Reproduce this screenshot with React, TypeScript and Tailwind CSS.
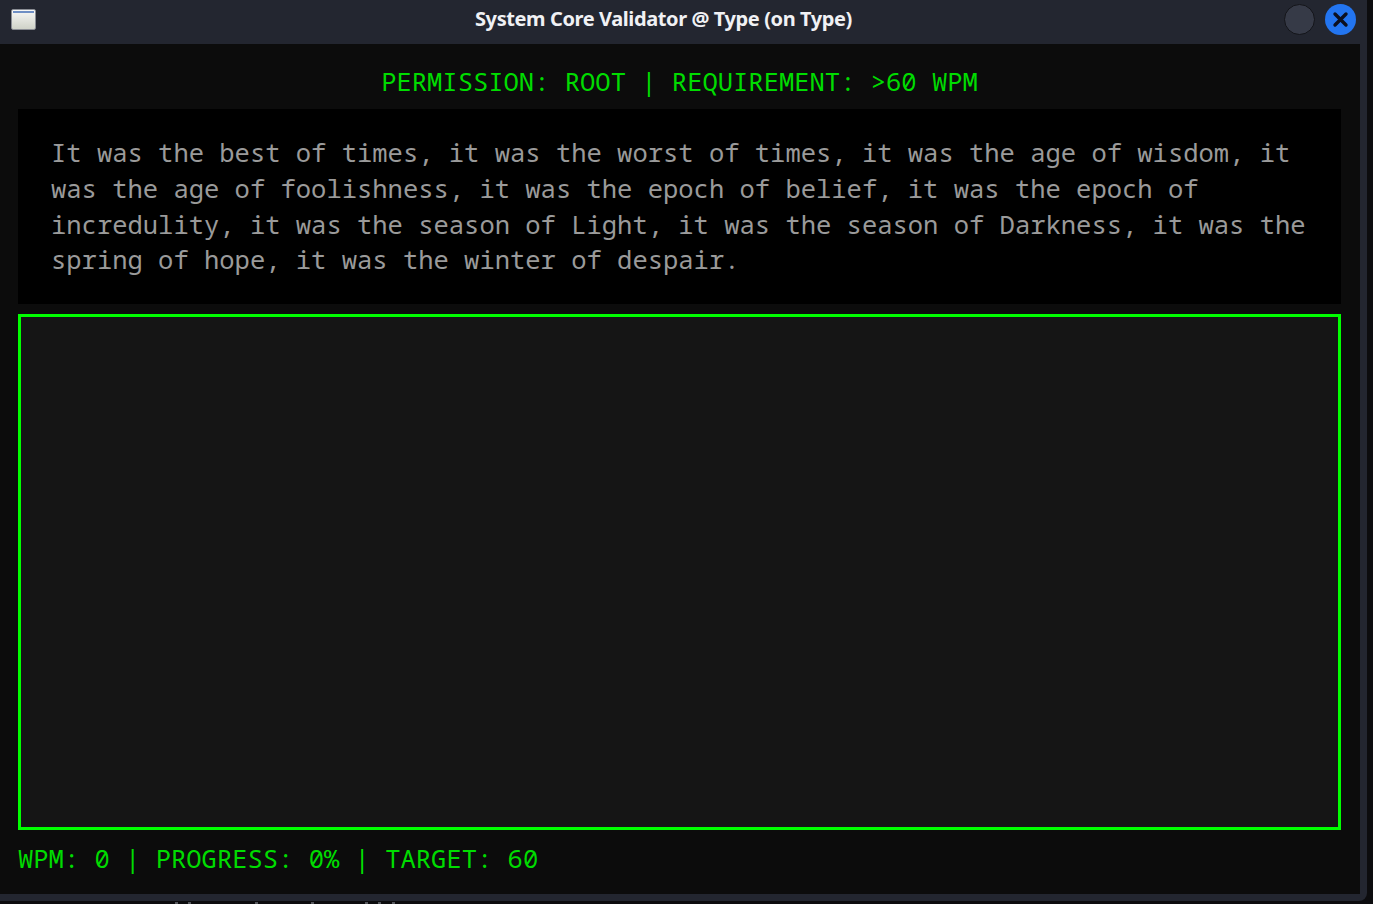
const specks = [175, 188, 255, 311, 365, 378, 392];

function WindowIcon() {
  return (
    <div className="w-[25px] h-[21px] rounded-[2px] border border-[#8a8d94] bg-gradient-to-b from-[#f8f8f6] to-[#cfd2c8] pt-[1px] px-[1px]">
      <div className="h-[2px] bg-[#6f8fc4]"></div>
    </div>
  );
}

export default function App() {
  return (
    <div className="relative w-[1373px] h-[904px] overflow-hidden bg-[#0c0c0e]">
      <div className="w-[1367px] h-[901px] bg-[#232630] rounded-br-[8px] flex flex-col">
        <div className="h-[44px] shrink-0 flex items-center justify-between pl-[11px] pr-[11px] pb-[6px]">
          <WindowIcon />
          <div className="flex-1 text-center pl-[7px] text-[#f0f1f4] text-[20px] font-bold tracking-[-0.4px] font-['Noto_Sans',sans-serif]">
            System Core Validator @ Type (on Type)
          </div>
          <div className="flex items-center gap-[10px]">
            <div className="w-[31px] h-[31px] rounded-full bg-[#363a47] border border-[#14151a]"></div>
            <div className="w-[31px] h-[31px] rounded-full bg-[#2375f0] flex items-center justify-center">
              <svg width="17" height="17" viewBox="0 0 17 17">
                <path d="M3 3L14 14M14 3L3 14" stroke="#0c1020" strokeWidth="3.4" strokeLinecap="round" />
              </svg>
            </div>
          </div>
        </div>

        <div className="w-[1360px] h-[850px] bg-[#0c0c0c] pl-[18px] pr-[19px] font-['Noto_Sans_Mono','DejaVu_Sans_Mono',monospace] text-[25.5px]">
          <div className="h-[65px] flex items-center justify-center pt-[10px] text-[#00dc00]">
            PERMISSION: ROOT | REQUIREMENT: &gt;60 WPM
          </div>
          <div className="h-[195px] bg-black pl-[33px] pr-[20px] pt-[26px] text-[#9a9a9a] leading-[35.8px]">
            It was the best of times, it was the worst of times, it was the age of wisdom, it was the age of foolishness, it was the epoch of belief, it was the epoch of incredulity, it was the season of Light, it was the season of Darkness, it was the spring of hope, it was the winter of despair.
          </div>
          <div className="mt-[10px] h-[516px] bg-[#151515] border-[3px] border-[#00ff00]"></div>
          <div className="h-[61px] flex items-center text-[#00dc00] pb-[4px]">
            WPM: 0 | PROGRESS: 0% | TARGET: 60
          </div>
        </div>
      </div>
      {specks.map((x) => (
        <div key={x} className="absolute bottom-0 w-[3px] h-[2px] bg-[#55575c]" style={{ left: x }}></div>
      ))}
    </div>
  );
}
